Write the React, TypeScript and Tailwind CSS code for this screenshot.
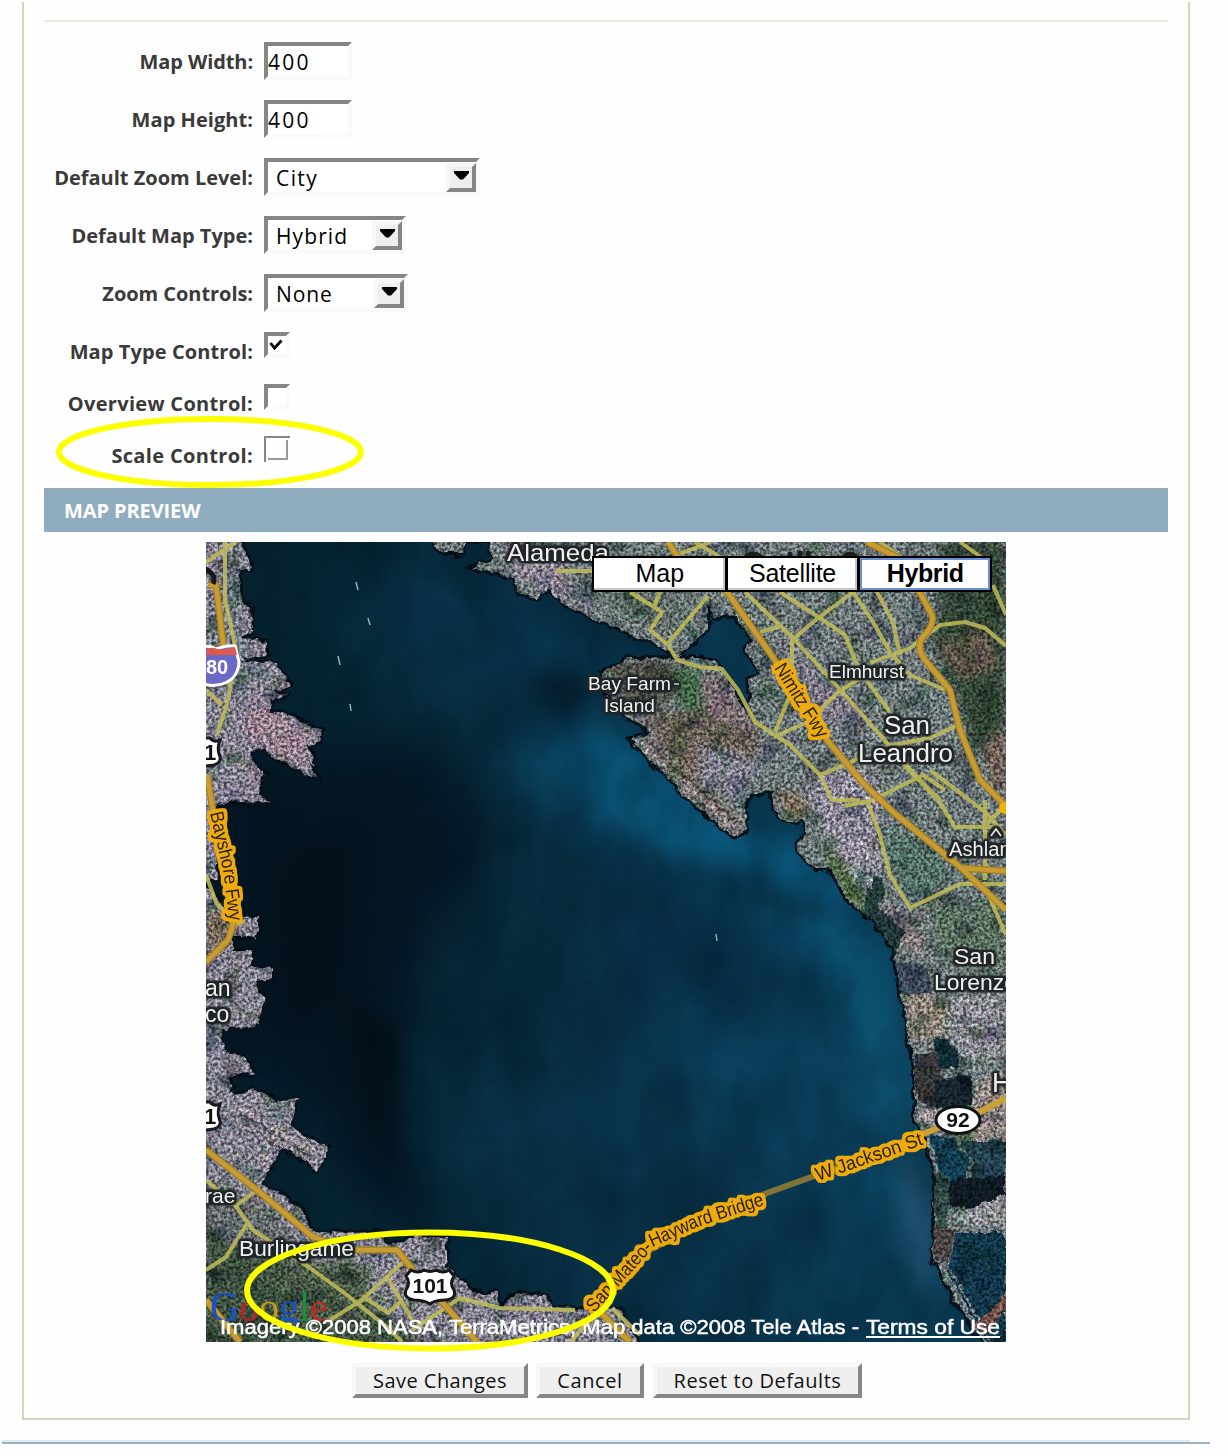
import React from "react";

const formFont = "font-['Open_Sans','Noto_Sans',sans-serif]";

function Row({ label, track, className, children }: { label: string; track: string; className: string; children: React.ReactNode }) {
  return (
    <div className={`flex ${className}`}>
      <div className="flex w-[229px] justify-end">
        <span className={`mt-px whitespace-nowrap text-[20px] font-bold leading-[38px] text-[#3a3a3a] ${track}`}>{label}</span>
      </div>
      <div className="ml-[11px]">{children}</div>
    </div>
  );
}

const inset = "border-4 border-t-[#868686] border-l-[#868686] border-r-[#fafafa] border-b-[#fafafa] bg-white";

function TextBox({ value }: { value: string }) {
  return (
    <div className={`h-[38px] w-[88px] text-[21px] leading-[32px] tracking-[2.2px] text-black ${inset}`}>{value}</div>
  );
}

function Select({ value, width, track }: { value: string; width: string; track: string }) {
  return (
    <div className={`flex h-[38px] items-start justify-between pl-2 text-black ${inset} ${width}`}>
      <span className={`text-[21px] leading-[32px] ${track}`}>{value}</span>
      <div className="mt-px flex h-[29px] w-[30px] justify-center border-4 border-t-[#f7f7f7] border-l-[#f7f7f7] border-r-[#868686] border-b-[#868686] bg-[#eeeeee] pt-[4px]">
        <svg width="15" height="9" viewBox="0 0 15 9"><path d="M0 0H15V2L9 8.5H6L0 2Z" /></svg>
      </div>
    </div>
  );
}

function Check({ checked }: { checked?: boolean }) {
  return (
    <div className={`h-[26px] w-[26px] ${inset}`}>
      {checked && (
        <svg className="ml-[1px] mt-[2px]" width="15" height="14" viewBox="0 0 15 14">
          <path d="M1.5 5L5.5 10L12.5 2.5" fill="none" stroke="#000" strokeWidth="2.8" />
        </svg>
      )}
    </div>
  );
}

function PushButton({ children, width, track }: { children: string; width: string; track: string }) {
  return (
    <button className={`h-[35px] whitespace-nowrap border-4 border-t-[#f8f8f8] border-l-[#f8f8f8] border-r-[#868686] border-b-[#868686] bg-[#efefef] text-[20px] leading-[26px] text-[#111] ${width} ${track}`}>
      {children}
    </button>
  );
}

const westLand =
  "M200 536H238L250 560L251 570L238 570L241 600L252 607L253 630L243 640L267 642L268 655L240 657L267 663L278 667L291 685L270 692L290 695L270 700V712H283L300 722L322 730L320 742L308 747L316 768L308 760L318 778L303 773L267 753L263 747L250 753L255 763L265 773L258 797L272 803L230 800L214 804L218 880H200Z";
const westMid =
  "M200 880L212 892L233 917L257 918V937H233V952H252V967L272 968V978L255 980L265 1000L255 1027L220 1028L227 1053L245 1057L255 1073L230 1077L232 1093L260 1090L277 1102L298 1098L290 1127L327 1148L318 1170L282 1148L262 1183L300 1207L313 1232L385 1233L387 1245L413 1238H447L445 1267L477 1293H497L498 1308L517 1293L547 1297L553 1307L583 1310L620 1308L640 1348H200Z";
const eastLand =
  "M427 536L445 553H463L466 540L490 542L493 560L473 567L513 578L520 593L538 600L547 587L563 603L600 622L663 647L677 658L708 630V600L713 617L737 617L753 640L745 650L760 673L748 680L750 717L735 690L720 667L702 658H627L603 673L600 687L623 713L650 733L630 740L690 800L733 837L747 830L745 803L750 793L773 790V810L787 822L803 820L807 833L797 843L800 853L817 870L830 868L847 900L873 920L893 950L898 980L907 1030L915 1070V1123L928 1140L935 1177L933 1260L950 1293L987 1348H1012V536Z";

const localRoads = [
  "M206 562L236 542M225 542V600L236 650L228 700L217 735M206 690L222 705",
  "M556 571H592M630 592L662 612L650 630L668 645L677 660L700 667L722 669L738 690L755 722L790 745L820 775L832 800L860 800",
  "M660 592L655 605M708 596L668 643",
  "M677 555L710 542M695 542L725 560M745 592L795 640L845 695L880 735L915 775L940 800",
  "M780 592L820 618L845 635L857 665L870 685L890 712",
  "M853 592L818 618L792 640V690L775 732M760 632L778 627",
  "M853 592L873 622L890 652L910 675L945 690M877 592L893 622L900 655",
  "M870 663L910 648L940 625L965 622L985 628L1006 646",
  "M778 735L808 722L838 692L870 672M820 775L860 758M888 746L930 738L960 724",
  "M845 806L873 800L923 775L945 790M880 735L907 768L938 800L955 827H1000M930 770L985 812L1006 835",
  "M868 803L880 835L890 875L910 908L960 884H1006M985 800L985 880M983 827L1006 805",
  "M984 885L1006 935M840 590L870 556M880 542L905 560",
  "M960 542L985 560M993 585L1006 615",
  "M206 875L216 902L235 925L245 921",
  "M206 1180L235 1205L253 1230L310 1268L343 1292L388 1328L402 1342",
  "M257 1190L234 1207M247 1224L226 1257L206 1270",
  "M403 1262L362 1300L330 1320M388 1278L412 1320M362 1296L388 1313L402 1300M412 1330L460 1298L500 1308L575 1310M590 1320L570 1342M612 1308L640 1335",
];

const arteries = [
  "M668 542L680 560L727 592L770 653L827 740L863 783L893 812L960 867L1006 910M960 868L1006 871",
  "M867 542L897 557L920 593L932 615Q935 625 922 638Q916 648 925 660L950 690L960 730L980 780L1003 803",
  "M206 1150L257 1190L313 1237L350 1250L397 1250L413 1270L443 1303L477 1342",
  "M206 1300L240 1342M600 1312L630 1342",
  "M208 585H216L224 650M207 775L213 810L233 925L228 940L206 962",
];

function MapPicture() {
  return (
    <svg className="block h-full w-full" viewBox="206 542 800 800" fontFamily="Liberation Sans, Arial, sans-serif">
      <defs>
        <linearGradient id="sea" x1="0" y1="0.1" x2="1" y2="0">
          <stop offset="0" stopColor="#06222f" />
          <stop offset="0.35" stopColor="#082b3e" />
          <stop offset="0.7" stopColor="#0a3b54" />
          <stop offset="1" stopColor="#0d4863" />
        </linearGradient>
        <filter id="soft" filterUnits="userSpaceOnUse" x="106" y="442" width="1000" height="1000" colorInterpolationFilters="sRGB"><feGaussianBlur stdDeviation="24" /></filter>
        <filter id="soft2" filterUnits="userSpaceOnUse" x="106" y="442" width="1000" height="1000" colorInterpolationFilters="sRGB"><feGaussianBlur stdDeviation="11" /></filter>
        <filter id="patch" x="-20%" y="-20%" width="140%" height="140%" colorInterpolationFilters="sRGB"><feGaussianBlur stdDeviation="5" /></filter>
        <filter id="grain" filterUnits="userSpaceOnUse" x="206" y="542" width="800" height="800" colorInterpolationFilters="sRGB">
          <feTurbulence type="fractalNoise" baseFrequency="0.33" numOctaves="3" seed="4" result="n" />
          <feColorMatrix in="n" values="2.3 0.3 0 0 -0.8  2.3 0 0.3 0 -0.8  2.3 0.15 0.15 0 -0.8  0 0 0 0 1" result="fine" />
          <feTurbulence type="fractalNoise" baseFrequency="0.045" numOctaves="3" seed="21" result="c" />
          <feColorMatrix in="c" values="1.6 0 0 0 0.2  1.3 0.3 0 0 0.2  1.3 0 0.3 0 0.2  0 0 0 0 1" result="coarse" />
          <feTurbulence type="fractalNoise" baseFrequency="0.09" numOctaves="3" seed="9" result="d" />
          <feDisplacementMap in="SourceGraphic" in2="d" scale="9" xChannelSelector="R" yChannelSelector="G" result="s" />
          <feComposite in="s" in2="coarse" operator="arithmetic" k1="1" k2="0" k3="0" k4="0" result="s2" />
          <feComposite in="s2" in2="fine" operator="arithmetic" k1="1" k2="0.5" k3="0" k4="0" />
        </filter>
        <filter id="waves" filterUnits="userSpaceOnUse" x="206" y="542" width="800" height="800" colorInterpolationFilters="sRGB">
          <feTurbulence type="fractalNoise" baseFrequency="0.02 0.012" numOctaves="5" seed="12" />
          <feColorMatrix values="0 0 0 0 0.01  0 0 0 0 0.08  0 0 0 0 0.13  1.5 0 0 0 -0.5" />
        </filter>
        <filter id="roadHalo" filterUnits="userSpaceOnUse" x="206" y="542" width="800" height="800" colorInterpolationFilters="sRGB">
          <feMorphology in="SourceAlpha" operator="dilate" radius="3" result="wide" />
          <feGaussianBlur in="wide" stdDeviation="1" />
          <feColorMatrix values="0 0 0 0 0.93  0 0 0 0 0.67  0 0 0 0 0.05  0 0 0 3 -0.6" result="halo" />
          <feMerge><feMergeNode in="halo" /><feMergeNode in="SourceGraphic" /></feMerge>
        </filter>
        <filter id="placeHalo" filterUnits="userSpaceOnUse" x="206" y="542" width="800" height="800" colorInterpolationFilters="sRGB">
          <feMorphology in="SourceAlpha" operator="dilate" radius="2" result="wide" />
          <feGaussianBlur in="wide" stdDeviation="1.5" />
          <feColorMatrix values="0 0 0 0 0.12  0 0 0 0 0.14  0 0 0 0 0.15  0 0 0 2 -0.2" result="halo" />
          <feMerge><feMergeNode in="halo" /><feMergeNode in="SourceGraphic" /></feMerge>
        </filter>
        <clipPath id="land"><path d={westLand} /><path d={westMid} /><path d={eastLand} /></clipPath>
        <path id="nimitz" d="M774 668L819 740" />
        <path id="bayshore" d="M210 813L223 870L230 925" />
        <path id="bridge" d="M594 1313L621 1284L655 1246L700 1226L770 1203" />
        <path id="jackson" d="M818 1181L928 1143" />
      </defs>

      <rect x="206" y="542" width="800" height="800" fill="url(#sea)" />
      <g filter="url(#soft)">
        <path d="M440 570L620 650L570 700L430 690L340 600Z" fill="#0a3c57" opacity="0.6" />
        <path d="M500 760L600 720L700 820L800 850L890 980L920 1150L870 1110L820 980L700 880L590 830Z" fill="#0c567a" opacity="0.9" />
        <path d="M206 740L290 760L420 740L500 850L450 900L380 1100L430 1240L370 1200L290 1080L206 1060Z" fill="#04101b" opacity="0.7" />
        <path d="M600 880L760 900L850 1010L800 1090L700 1040L590 960Z" fill="#083049" opacity="0.7" />
        <path d="M400 1120L600 1000L760 1100L800 1300L560 1300Z" fill="#0a374f" opacity="0.6" />
        <path d="M650 1000L880 1050L920 1200L900 1342L820 1180L700 1120Z" fill="#0b4665" opacity="0.7" />
        <path d="M860 1000L910 1040L915 1160L880 1140Z" fill="#135c7c" opacity="0.7" />
      </g>
      <g filter="url(#soft2)">
        <path d="M570 745L645 745L735 840L800 850L860 900L830 905L740 865L680 850L600 800Z" fill="#0b5f86" opacity="0.8" />
        <path d="M520 680Q560 660 600 690L575 715Q540 710 520 680Z" fill="#061e2e" opacity="0.8" />
        <path d="M600 825L670 860L740 870L840 905L800 920L700 890L620 870Z" fill="#083047" opacity="0.7" />
        <path d="M345 1000L400 1030L400 1190L370 1130Z" fill="#030b12" opacity="0.7" />
        <path d="M280 860L350 840L340 1000L290 1020Z" fill="#030a14" opacity="0.5" />
        <path d="M900 1150L932 1180L930 1320L905 1250Z" fill="#2c5878" opacity="0.7" />
      </g>
      <rect x="206" y="542" width="800" height="800" filter="url(#waves)" opacity="0.45" />
      <g stroke="#b9d0d4" strokeWidth="1.5" opacity="0.8">
        <path d="M356 582l2 8M338 656l2 9M350 704l1 7M716 934l1 7M368 618l2 7" />
      </g>

      <g filter="url(#grain)">
        <g fill="none" stroke="#06141e" strokeWidth="5">
          <path d={westLand} /><path d={westMid} /><path d={eastLand} />
        </g>
        <path d={westLand} fill="#85818f" />
        <path d={westMid} fill="#83818e" />
        <path d={eastLand} fill="#6d7879" />
        <g clipPath="url(#land)">
          <g filter="url(#patch)">
            <path d="M206 1225L300 1260L380 1310L430 1348H200Z" fill="#3f5241" />
            <path d="M206 1180L260 1205L330 1270L290 1275L206 1230Z" fill="#666c6d" />
            <path d="M270 1260L370 1265L370 1330L290 1335Z" fill="#4b5c48" />
            <path d="M250 700L310 730L300 770L240 730Z" fill="#97828f" />
            <path d="M240 570L206 600V700L250 700Z" fill="#747a84" />
            <path d="M206 905L240 925L225 945L206 950Z" fill="#786a5a" />
            <path d="M940 542H1006V790L970 740L950 680L930 640L940 610Z" fill="#354738" />
            <path d="M940 645L985 630L998 665L960 680Z" fill="#66594e" />
            <path d="M985 740L1006 730V790H990Z" fill="#77655a" />
            <path d="M605 660L680 660V690L655 710L620 700Z" fill="#54534e" />
            <path d="M674 668L705 670L700 715L680 708Z" fill="#3f6646" />
            <path d="M702 672L730 680L762 735L740 745L700 720Z" fill="#7e7074" />
            <path d="M640 715L700 710L760 735L750 780L690 780Z" fill="#6d6459" />
            <path d="M700 740L760 760L740 800L700 780Z" fill="#807f8c" />
            <path d="M635 738L655 742L745 825L730 835Z" fill="#7c726b" />
            <path d="M775 792H800L810 812L790 820Z" fill="#806e5d" />
            <path d="M500 545L560 550L575 600L520 580Z" fill="#8c8290" />
            <path d="M560 570L680 595L700 635L640 625Z" fill="#626f6a" />
            <path d="M770 630L850 700L870 740L825 720Z" fill="#7f7987" />
            <path d="M800 770L870 770L900 870L840 870Z" fill="#8d8997" />
            <path d="M815 835L850 900L875 915L850 870Z" fill="#4e673e" />
            <path d="M870 820L940 850L950 880L910 905L885 860Z" fill="#547067" />
            <path d="M930 905L1006 890V970L940 960Z" fill="#5b7060" />
            <path d="M880 900L925 925L930 950L895 955Z" fill="#867c80" />
            <path d="M905 990L945 1000V1045L910 1035Z" fill="#8f857a" />
            <path d="M945 995H1006V1060H960Z" fill="#85868c" />
          </g>
          <path d="M869 875L886 878L878 905L905 932L892 965L868 965L862 918Z" fill="#243b3b" />
          <path d="M845 868H872V888L855 885Z" fill="#8e9a9e" />
          <path d="M896 962L930 965V994H898Z" fill="#3e4a59" />
          <path d="M933 1040L948 1038L962 1060L960 1068H940Z" fill="#112d35" />
          <path d="M915 1055L935 1050L950 1100L932 1110L916 1100Z" fill="#38373b" />
          <path d="M935 1080L972 1075V1105L935 1108Z" fill="#17262e" />
          <path d="M918 1112L950 1108L955 1130L930 1130Z" fill="#9b9192" />
          <path d="M975 1080L1006 1070V1142L970 1140Z" fill="#8e8582" />
          <path d="M930 1135L953 1138L970 1160L965 1180L940 1180Z" fill="#123e52" />
          <path d="M960 1140H1006V1178H972V1160Z" fill="#24424f" />
          <path d="M948 1180L1006 1175V1195L975 1212L950 1205Z" fill="#101b24" />
          <path d="M934 1175H950L948 1230H936Z" fill="#314b43" />
          <path d="M955 1232L1006 1230V1342H985L948 1270Z" fill="#12374a" />
          <path d="M934 1228H955L948 1262H935Z" fill="#4b4543" />
          <path d="M950 1215L1006 1195V1226H960Z" fill="#8e8f94" />
          <path d="M975 1325L1006 1295V1310L985 1335Z" fill="#79544c" />
          <g stroke="#a99c9e" strokeWidth="4" fill="none" opacity="0.7">
            <path d="M640 744L735 828M235 1105L318 1153M230 1118L310 1160M262 1165L285 1105" />
            <path d="M955 1232H1006M950 1268L990 1342" strokeWidth="2" />
          </g>
          <g stroke="#3b3a43" strokeWidth="2" fill="none" opacity="0.75">
            <path d="M650 745L733 820M238 1112L312 1157M250 1130L280 1147M685 718L745 745M677 735L740 760" />
          </g>
          <g stroke="#c6c2cb" strokeWidth="1.5" fill="none" opacity="0.45">
            <path d="M950 1000H1006M945 1012H1006M945 1025H1006M950 1040H1006M960 1055H1006M960 990V1060M973 990V1070M987 990V1070M862 775L880 860M850 780L868 865M838 785L855 850M876 780L890 840" />
          </g>
        </g>
      </g>

      <g fill="none" stroke="#c3bd58" strokeWidth="4" strokeLinejoin="round" opacity="0.85">
        {localRoads.map((d) => <path key={d} d={d} />)}
      </g>
      <g fill="none" stroke="#a5801f" strokeWidth="7" strokeLinejoin="round">
        {arteries.map((d) => <path key={d} d={d} />)}
      </g>
      <g fill="none" stroke="#c79c34" strokeWidth="4.5" strokeLinejoin="round">
        {arteries.map((d) => <path key={d} d={d} />)}
      </g>
      <path d="M594 1310L621 1280L650 1250L707 1220L767 1193L817 1175L927 1132" fill="none" stroke="#807438" strokeWidth="6" />
      <path d="M920 1135L980 1112L1006 1098" fill="none" stroke="#cba135" strokeWidth="6" />
      <circle cx="1005" cy="808" r="6" fill="#edb400" />

      <g fontSize="19" fill="#2b2105" filter="url(#roadHalo)">
        <text><textPath href="#nimitz" textLength="84" lengthAdjust="spacingAndGlyphs">Nimitz Fwy</textPath></text>
        <text><textPath href="#bayshore" textLength="110" lengthAdjust="spacingAndGlyphs">Bayshore Fwy</textPath></text>
        <text><textPath href="#bridge" textLength="208" lengthAdjust="spacingAndGlyphs">San Mateo-Hayward Bridge</textPath></text>
        <text><textPath href="#jackson" textLength="112" lengthAdjust="spacingAndGlyphs">W Jackson St</textPath></text>
      </g>

      <g fill="none" stroke="#191e20" strokeWidth="5" strokeLinecap="round">
        <path d="M744 559Q752 550 762 558M790 558V554M800 558V553M808 558V553M843 558Q850 550 857 558" />
      </g>
      <g fill="#f0f0f0" filter="url(#placeHalo)">
        <text x="507" y="561" fontSize="24" textLength="102" lengthAdjust="spacingAndGlyphs">Alameda</text>
        <text x="588" y="690" fontSize="18.5" textLength="83" lengthAdjust="spacingAndGlyphs">Bay Farm</text>
        <path d="M674 684H679" stroke="#cfcfcf" strokeWidth="1.5" />
        <text x="604" y="712" fontSize="18.5" textLength="51" lengthAdjust="spacingAndGlyphs">Island</text>
        <text x="829" y="678" fontSize="18.5" textLength="75" lengthAdjust="spacingAndGlyphs">Elmhurst</text>
        <text x="884" y="734" fontSize="25" textLength="46" lengthAdjust="spacingAndGlyphs">San</text>
        <text x="858" y="762" fontSize="25" textLength="95" lengthAdjust="spacingAndGlyphs">Leandro</text>
        <text x="949" y="856" fontSize="20" textLength="73" lengthAdjust="spacingAndGlyphs">Ashland</text>
        <path d="M991 836L996 829L1001 836" fill="none" stroke="#ddd" strokeWidth="1.8" />
        <text x="954" y="964" fontSize="22.5" textLength="41" lengthAdjust="spacingAndGlyphs">San</text>
        <text x="934" y="990" fontSize="22.5" textLength="83" lengthAdjust="spacingAndGlyphs">Lorenzo</text>
        <text x="992" y="1092" fontSize="27">H</text>
        <text x="205" y="996" fontSize="23">an</text>
        <text x="205" y="1022" fontSize="23">co</text>
        <text x="205" y="1203" fontSize="21">rae</text>
        <text x="239" y="1256" fontSize="22" textLength="115" lengthAdjust="spacingAndGlyphs">Burlingame</text>
      </g>

      <g>
        <path d="M195 650Q206 643 216 649Q228 645 235 646L239 662Q238 682 217 685Q206 687 196 680Z" fill="#6b69c6" stroke="#fff" strokeWidth="3" />
        <path d="M206 650Q212 646 217 649Q226 650 235 647L237 655H206Z" fill="#df584b" />
        <text x="206" y="674" fontSize="20" fontWeight="bold" fill="#fff">80</text>
        <path d="M200 566Q218 574 213 584" fill="none" stroke="#15191c" strokeWidth="5" />
      </g>
      {[752, 1116].map((y) => (
        <g key={y}>
          <path d={`M198 ${y - 14}H210Q214 ${y - 9} 220 ${y - 12}Q217 ${y - 4} 219 ${y + 2}Q223 ${y + 10} 214 ${y + 13}Q206 ${y + 14} 198 ${y + 15}Z`} fill="#fff" stroke="#17191c" strokeWidth="3" />
          <text x="204" y={y + 8} fontSize="22" fontWeight="bold" fill="#111">1</text>
        </g>
      ))}
      <path d="M411 1270Q418 1274 424 1270Q430 1273 436 1270Q443 1274 449 1270L454 1276Q449 1284 454 1290Q457 1299 445 1300Q435 1300 430 1304Q424 1300 414 1300Q403 1298 406 1290Q411 1283 406 1276Z" fill="#fff" stroke="#15171a" strokeWidth="3" />
      <text x="430" y="1293" fontSize="21" fontWeight="bold" fill="#151515" textAnchor="middle" textLength="35">101</text>
      <ellipse cx="958" cy="1120" rx="22" ry="13.5" fill="#fff" stroke="#111" strokeWidth="3" />
      <text x="958" y="1127" fontSize="21" fontWeight="bold" fill="#111" textAnchor="middle">92</text>

      <text x="210" y="1321" fontFamily="Liberation Serif, serif" fontSize="43" textLength="118" lengthAdjust="spacingAndGlyphs">
        <tspan fill="#174fd0">G</tspan><tspan fill="#bb2424">o</tspan><tspan fill="#c09a1a">o</tspan><tspan fill="#1a52c8">g</tspan><tspan fill="#16903a">l</tspan><tspan fill="#bb2a2a">e</tspan>
      </text>
      <g fontSize="20" fill="#fff" stroke="#fff" strokeWidth="0.5">
        <text x="220" y="1334" textLength="639" lengthAdjust="spacingAndGlyphs">Imagery ©2008 NASA, TerraMetrics, Map data ©2008 Tele Atlas -</text>
        <text x="866" y="1334" textLength="134" lengthAdjust="spacingAndGlyphs">Terms of Use</text>
        <path d="M866 1337H1000" strokeWidth="2" />
      </g>
    </svg>
  );
}

export default function App() {
  return (
    <div className={`relative h-[1456px] w-[1228px] overflow-hidden bg-[#fefefe] pt-[2px] ${formFont}`}>
      <main className="ml-[22px] flex h-[1418px] w-[1168px] flex-col border-2 border-t-0 border-[#d4d7bb] px-[20px]">
        <div className="mt-[18px] h-[2px] shrink-0 bg-[#e8eadd]" />
        <form className="-ml-[20px] mt-[20px] h-[446px] shrink-0">
          <Row className="h-[58px]" label="Map Width:" track="tracking-[-0.1px]"><TextBox value="400" /></Row>
          <Row className="h-[58px]" label="Map Height:" track="tracking-[0.05px]"><TextBox value="400" /></Row>
          <Row className="h-[58px]" label="Default Zoom Level:" track="tracking-[0px]"><Select value="City" width="w-[216px]" track="tracking-[1.4px]" /></Row>
          <Row className="h-[58px]" label="Default Map Type:" track="tracking-[0px]"><Select value="Hybrid" width="w-[142px]" track="tracking-[1.1px]" /></Row>
          <Row className="h-[58px]" label="Zoom Controls:" track="tracking-[-0.05px]"><Select value="None" width="w-[144px]" track="tracking-[0.9px]" /></Row>
          <Row className="h-[52px]" label="Map Type Control:" track="tracking-[0.1px]"><Check checked /></Row>
          <Row className="h-[52px]" label="Overview Control:" track="tracking-[0.3px]"><Check /></Row>
          <Row className="h-[52px]" label="Scale Control:" track="tracking-[0.35px]">
            <div className="h-[26px] w-[26px] border-l-2 border-t-2 border-[#868686] pb-[2px] pr-[2px] pl-[2px] pt-[2px]">
              <div className="h-full w-full border-b-2 border-r-2 border-[#999]" />
            </div>
          </Row>
        </form>
        <h2 className="h-[44px] shrink-0 bg-[#8fadbe] pl-[20px] text-[20px] font-bold leading-[45px] tracking-[-0.1px] text-white">MAP PREVIEW</h2>
        <section className="relative mx-auto mt-[10px] h-[800px] w-[800px] shrink-0 overflow-hidden">
          <MapPicture />
          <div className="absolute left-[386px] top-[14px] flex h-[36px] w-[400px] gap-[3px] border-2 border-black bg-black font-['Liberation_Sans',Arial,sans-serif] text-[25px] leading-[31px] text-black">
            <div className="flex-1 border-b-2 border-r-2 border-[#c8c8c8] bg-white pl-[3px] text-center">Map</div>
            <div className="flex-1 border-b-2 border-r-2 border-[#c8c8c8] bg-white pl-[2px] text-center tracking-[-0.2px]">Satellite</div>
            <div className="flex-1 border-2 border-[#6a8fd4] bg-white text-center font-bold leading-[27px] tracking-[-0.4px]">Hybrid</div>
          </div>
        </section>
        <div className="ml-[308px] mt-[21px] flex">
          <PushButton width="w-[176px]" track="tracking-[0.45px]">Save Changes</PushButton>
          <PushButton width="w-[108px] ml-[8px]" track="tracking-[0.6px]">Cancel</PushButton>
          <PushButton width="w-[209px] ml-[9px]" track="tracking-[0.55px]">Reset to Defaults</PushButton>
        </div>
      </main>
      <div className="ml-[2px] mt-[20px] h-[2px] w-[1188px] bg-[#dfe8ee]" />
      <div className="ml-[2px] h-[2px] w-[1208px] bg-[#9ab1c3]" />
      <svg className="pointer-events-none absolute left-0 top-0 h-[1456px] w-[1228px]" viewBox="0 0 1228 1456" fill="none" stroke="#fbff00" strokeWidth="6">
        <ellipse cx="210" cy="452" rx="151" ry="33" />
        <ellipse cx="430" cy="1290.5" rx="183" ry="58" />
      </svg>
    </div>
  );
}
